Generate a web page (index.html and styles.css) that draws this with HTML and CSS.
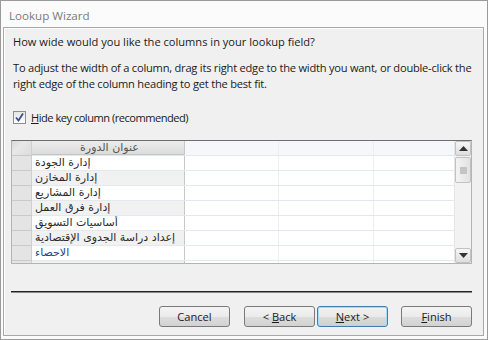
FILE: index.html
```html
<!DOCTYPE html>
<html lang="en">
<head>
  <meta charset="UTF-8">
  <title>Lookup Wizard</title>
  <link rel="stylesheet" href="styles.css">
</head>
<body>

  <div class="window">
    <div class="titlebar">Lookup Wizard</div>

    <div class="client">
      <p class="question">How wide would you like the columns in your lookup field?</p>
      <p class="info">To adjust the width of a column, drag its right edge to the width you want, or double-click the<br>right edge of the column heading to get the best fit.</p>

      <label class="check">
        <span class="box">
          <svg width="11" height="11" viewBox="0 0 11 11">
            <path d="M2 5.5 L4.5 8.5 L9 1.5" fill="none" stroke="#3a4f8f" stroke-width="1.8"/>
          </svg>
        </span>
        <span class="label"><u>H</u>ide key column (recommended)</span>
      </label>

      <div class="grid">
        <div class="sheet">
          <div class="row head">
            <div class="sel corner"></div>
            <div class="cell c1" dir="rtl">عنوان الدورة</div>
            <div class="cell c2"></div>
            <div class="cell c3"></div>
            <div class="cell c4"></div>
          </div>
          <div class="row">
            <div class="sel"></div>
            <div class="cell c1"><span dir="rtl">إدارة الجودة</span></div>
            <div class="cell c2"></div><div class="cell c3"></div><div class="cell c4"></div>
          </div>
          <div class="row alt">
            <div class="sel"></div>
            <div class="cell c1"><span dir="rtl">إدارة المخازن</span></div>
            <div class="cell c2"></div><div class="cell c3"></div><div class="cell c4"></div>
          </div>
          <div class="row">
            <div class="sel"></div>
            <div class="cell c1"><span dir="rtl">إدارة المشاريع</span></div>
            <div class="cell c2"></div><div class="cell c3"></div><div class="cell c4"></div>
          </div>
          <div class="row alt">
            <div class="sel"></div>
            <div class="cell c1"><span dir="rtl">إدارة فرق العمل</span></div>
            <div class="cell c2"></div><div class="cell c3"></div><div class="cell c4"></div>
          </div>
          <div class="row">
            <div class="sel"></div>
            <div class="cell c1"><span dir="rtl">أساسيات التسويق</span></div>
            <div class="cell c2"></div><div class="cell c3"></div><div class="cell c4"></div>
          </div>
          <div class="row alt">
            <div class="sel"></div>
            <div class="cell c1"><span dir="rtl">إعداد دراسة الجدوى الإقتصادية</span></div>
            <div class="cell c2"></div><div class="cell c3"></div><div class="cell c4"></div>
          </div>
          <div class="row">
            <div class="sel"></div>
            <div class="cell c1 blue"><span dir="rtl">الاحصاء</span></div>
            <div class="cell c2"></div><div class="cell c3"></div><div class="cell c4"></div>
          </div>
          <div class="row alt">
            <div class="sel"></div>
            <div class="cell c1"></div>
            <div class="cell c2"></div><div class="cell c3"></div><div class="cell c4"></div>
          </div>
        </div>

        <div class="scrollbar">
          <div class="sb-btn">
            <svg width="9" height="5" viewBox="0 0 9 5"><path d="M0 5 L4.5 0 L9 5 Z" fill="#333"/></svg>
          </div>
          <div class="thumb"><span class="grip"></span></div>
          <div class="track"></div>
          <div class="sb-btn">
            <svg width="9" height="5" viewBox="0 0 9 5"><path d="M0 0 L4.5 5 L9 0 Z" fill="#333"/></svg>
          </div>
        </div>
      </div>

      <div class="separator"></div>

      <div class="buttons">
        <button class="btn">Cancel</button>
        <span class="gap-lg"></span>
        <button class="btn">&lt; <u>B</u>ack</button>
        <button class="btn default"><u>N</u>ext &gt;</button>
        <span class="gap-md"></span>
        <button class="btn"><u>F</u>inish</button>
      </div>
    </div>
  </div>

</body>
</html>
```

FILE: styles.css
```css
body {
  margin: 0;
  font-family: 'Open Sans', 'DejaVu Sans', sans-serif;
  font-size: 11.1px;
  color: #1a1a1a;
  background: #fff;
}

.window {
  width: 488px;
  height: 340px;
  box-sizing: border-box;
  border: 1px solid #9a9a9a;
  background: #fbfbfb;
  display: flex;
  flex-direction: column;
}

.titlebar {
  height: 26px;
  padding-left: 8px;
  line-height: 30px;
  font-size: 11.6px;
  color: #7a7a7a;
}

.client {
  flex: 1;
  margin: 0 3px 3px 2px;
  border: 1px solid #a8a8a8;
  box-shadow: inset 1px 1px 0 #fff;
  background: #f0f0f0;
  padding: 6px 0 0 9px;
}

.question,
.info {
  margin: 0;
  line-height: 16px;
}

.info {
  margin-top: 10px;
  white-space: nowrap;
  letter-spacing: -0.22px;
}

.check {
  display: flex;
  align-items: center;
  gap: 5px;
  margin-top: 17px;
  height: 16px;
}

.label {
  letter-spacing: -0.5px;
}

.check u,
.btn u {
  text-decoration-thickness: 1px;
  text-underline-offset: 1px;
}

.box {
  width: 11px;
  height: 11px;
  border: 1px solid #8e8f8f;
  background: linear-gradient(#e6e6e6, #fdfdfd);
  display: flex;
}

.grid {
  margin: 15px 0 0 -2px;
  width: 461px;
  height: 124px;
  box-sizing: border-box;
  border: 1px solid #b4b4b4;
  border-top-color: #6e6e6e;
  display: flex;
  background: #fff;
}

.sheet {
  flex: 1;
  overflow: hidden;
}

.row {
  display: flex;
  height: 15px;
  box-sizing: border-box;
  border-bottom: 1px solid #e3e8ef;
}

.row.head {
  background: #f5f7fb;
}

.sel {
  width: 19px;
  flex: none;
  background: #e4e4e4;
  border-right: 1px solid #cfcfcf;
  border-bottom: 1px solid #c9c9c9;
  margin-bottom: -1px;
}

.sel.corner {
  background: linear-gradient(135deg, #d8d8d8 0%, #e8e8e8 40%, #dcdcdc 100%);
}

.cell {
  flex: none;
  box-sizing: border-box;
  border-right: 1px solid #eceef2;
  line-height: 14px;
  overflow: hidden;
  white-space: nowrap;
}

.c1 {
  width: 153px;
  padding-left: 3px;
  font-family: 'DejaVu Sans', sans-serif;
  font-size: 11px;
  color: #2b2b2b;
  border-right-color: #c8c8c8;
}

.c2 { width: 94px; }
.c3 { width: 95px; }
.c4 { flex: 1; border-right: none; }

.head .c1 {
  background: linear-gradient(#ececec, #dcdcdc);
  text-align: center;
  color: #555;
  border-bottom: 1px solid #c4c4c4;
}

.alt .c1 {
  background: #f1f1f1;
}

.blue {
  color: #27458a;
}

.scrollbar {
  width: 16px;
  flex: none;
  display: flex;
  flex-direction: column;
  background: #f2f2f2;
  border-left: 1px solid #e6e6e6;
}

.sb-btn {
  height: 15px;
  box-sizing: border-box;
  border: 1px solid #c2c2c2;
  border-radius: 2px;
  background: linear-gradient(#f6f6f6, #dedede);
  display: flex;
  align-items: center;
  justify-content: center;
}

.thumb {
  height: 26px;
  margin-top: 1px;
  box-sizing: border-box;
  border: 1px solid #c2c2c2;
  border-radius: 2px;
  background: linear-gradient(90deg, #f4f4f4, #e2e2e2);
  display: flex;
  align-items: center;
  justify-content: center;
}

.grip {
  width: 7px;
  height: 7px;
  background: #c4c4c4;
}

.track {
  flex: 1;
}

.separator {
  margin: 27px 0 0 -2px;
  width: 461px;
  height: 0;
  border-top: 1px solid #222;
  border-bottom: 1px solid #8a8a8a;
}

.buttons {
  display: flex;
  margin: 13px 0 0 146px;
}

.btn {
  width: 71px;
  height: 21px;
  padding: 0;
  font-family: 'Open Sans', sans-serif;
  font-size: 11.1px;
  color: #1a1a1a;
  border: 1px solid #7a7a7a;
  border-radius: 3px;
  background: linear-gradient(#f4f4f4 0%, #ebebeb 50%, #dddddd 51%, #d2d2d2 100%);
}

.btn.default {
  margin-left: 2px;
  border-color: #3c7fb1;
  box-shadow: inset 0 0 0 1px #a6dbf6;
  background: linear-gradient(#f2f2f2 0%, #e9e9e9 50%, #dcdcdc 51%, #d0d0d0 100%);
}

.gap-lg { width: 14px; }
.gap-md { width: 13px; }
```
